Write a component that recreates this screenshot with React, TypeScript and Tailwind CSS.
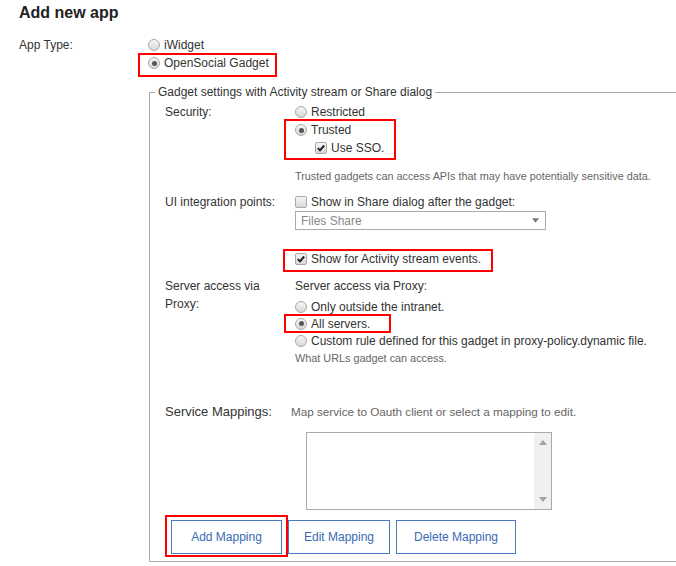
import type { ReactNode } from "react";

const Radio = ({ checked }: { checked?: boolean }) => (
  <span className="inline-flex h-[12px] w-[12px] shrink-0 items-center justify-center rounded-full border border-[#a8a8a8] bg-linear-to-b from-[#f6f6f6] to-[#d8d8d8]">
    {checked && <span className="h-[5px] w-[5px] rounded-full bg-[#555]" />}
  </span>
);

const Checkbox = ({ checked }: { checked?: boolean }) => (
  <span className="inline-flex h-[12px] w-[12px] shrink-0 items-center justify-center rounded-[2px] border border-[#a8a8a8] bg-linear-to-b from-[#f6f6f6] to-[#d8d8d8]">
    {checked && (
      <svg viewBox="0 0 12 12" className="h-[10px] w-[10px]">
        <path d="M2.2 6.2 L4.8 8.8 L9.8 3" fill="none" stroke="#222" strokeWidth="2.4" />
      </svg>
    )}
  </span>
);

const Option = ({
  control,
  children,
  className = "h-[18px]",
}: {
  control: ReactNode;
  children: ReactNode;
  className?: string;
}) => (
  <div className={`flex items-center gap-[4px] whitespace-nowrap ${className}`}>
    {control}
    <span>{children}</span>
  </div>
);

const Mark = ({ className }: { className: string }) => (
  <span className={`pointer-events-none absolute border-2 border-[#f00] ${className}`} />
);

const Triangle = ({ down }: { down?: boolean }) => (
  <svg viewBox="0 0 8 5" className="h-[5px] w-[8px]">
    <path d={down ? "M0 0 H8 L4 5 Z" : "M0 5 H8 L4 0 Z"} fill="#a3a3a3" />
  </svg>
);

export default function App() {
  return (
    <div className="h-[566px] w-[676px] overflow-hidden bg-white font-['Liberation_Sans',Arial,sans-serif] text-[12px] text-[#333]">
      <h1 className="pl-[19px] pt-[3px] text-[16px] font-bold leading-[20px] text-[#222]">
        Add new app
      </h1>

      <div className="mt-[13px] flex">
        <div className="w-[148px] pl-[19px] leading-[18px]">App Type:</div>
        <div className="flex flex-col">
          <Option control={<Radio />}>iWidget</Option>
          <div className="relative">
            <Option control={<Radio checked />}>OpenSocial Gadget</Option>
            <Mark className="-left-[10px] -top-[1px] h-[24px] w-[139px]" />
          </div>
        </div>
      </div>

      <fieldset className="ml-[149px] mt-[11px] w-[560px] border border-[#aaa] pb-[7px]">
        <legend className="ml-[5px] px-[3px] leading-[18px]">
          Gadget settings with Activity stream or Share dialog
        </legend>

        <div className="pl-[15px] pt-[2px]">
          {/* security */}
          <div className="grid grid-cols-[130px_1fr]">
            <div className="leading-[18px]">Security:</div>
            <div>
              <Option control={<Radio />}>Restricted</Option>
              <div className="relative">
                <Option control={<Radio checked />}>Trusted</Option>
                <Option control={<Checkbox checked />} className="h-[18px] pl-[20px]">
                  Use SSO.
                </Option>
                <Mark className="-left-[11px] -top-[2px] h-[41px] w-[112px]" />
              </div>
              <div className="mt-[12px] text-[10.85px] leading-[14px] text-[#666]">
                Trusted gadgets can access APIs that may have potentially sensitive data.
              </div>
            </div>
          </div>

          {/* ui integration */}
          <div className="mt-[10px] grid grid-cols-[130px_1fr]">
            <div className="leading-[18px]">UI integration points:</div>
            <div>
              <Option control={<Checkbox />}>Show in Share dialog after the gadget:</Option>
              <div className="flex h-[19px] w-[251px] items-center justify-between border border-[#aaa] pl-[5px] pr-[6px] text-[#888]">
                <span>Files Share</span>
                <svg viewBox="0 0 8 5" className="h-[5px] w-[7px]">
                  <path d="M0 0 H8 L4 5 Z" fill="#777" />
                </svg>
              </div>
              <div className="relative mt-[20px]">
                <Option control={<Checkbox checked />}>Show for Activity stream events.</Option>
                <Mark className="-left-[12px] -top-[1px] h-[23px] w-[210px]" />
              </div>
            </div>
          </div>

          {/* proxy */}
          <div className="mt-[9px] grid grid-cols-[130px_1fr]">
            <div className="leading-[18px]">
              Server access via
              <br />
              Proxy:
            </div>
            <div>
              <div className="h-[21px] leading-[19px]">Server access via Proxy:</div>
              <Option control={<Radio />} className="h-[17px]">
                Only outside the intranet.
              </Option>
              <div className="relative">
                <Option control={<Radio checked />} className="h-[17px]">
                  All servers.
                </Option>
                <Mark className="-left-[11px] -top-[1px] h-[19px] w-[107px]" />
              </div>
              <Option control={<Radio />} className="h-[17px]">
                Custom rule defined for this gadget in proxy-policy.dynamic file.
              </Option>
              <div className="mt-[2px] text-[10.85px] leading-[14px] text-[#666]">
                What URLs gadget can access.
              </div>
            </div>
          </div>

          {/* service mappings */}
          <div className="mt-[38px] flex items-center leading-[18px]">
            <div className="w-[126px] text-[13px]">Service Mappings:</div>
            <div className="text-[11.7px] text-[#666]">
              Map service to Oauth client or select a mapping to edit.
            </div>
          </div>

          <div className="ml-[141px] mt-[11px] flex h-[78px] w-[246px] border border-[#aaa]">
            <div className="flex-1" />
            <div className="flex w-[17px] flex-col items-center justify-between bg-[#f0f0f0] py-[7px]">
              <Triangle />
              <Triangle down />
            </div>
          </div>

          <div className="relative ml-[6px] mt-[10px] flex gap-[6px] text-[#3a6ab4]">
            <button className="h-[34px] w-[111px] border border-[#4a7ac0] bg-white">Add Mapping</button>
            <button className="h-[34px] w-[102px] border border-[#4a7ac0] bg-white">Edit Mapping</button>
            <button className="h-[34px] w-[120px] border border-[#4a7ac0] bg-white">Delete Mapping</button>
            <Mark className="-left-[6px] -top-[5px] h-[42px] w-[123px]" />
          </div>
        </div>
      </fieldset>
    </div>
  );
}
